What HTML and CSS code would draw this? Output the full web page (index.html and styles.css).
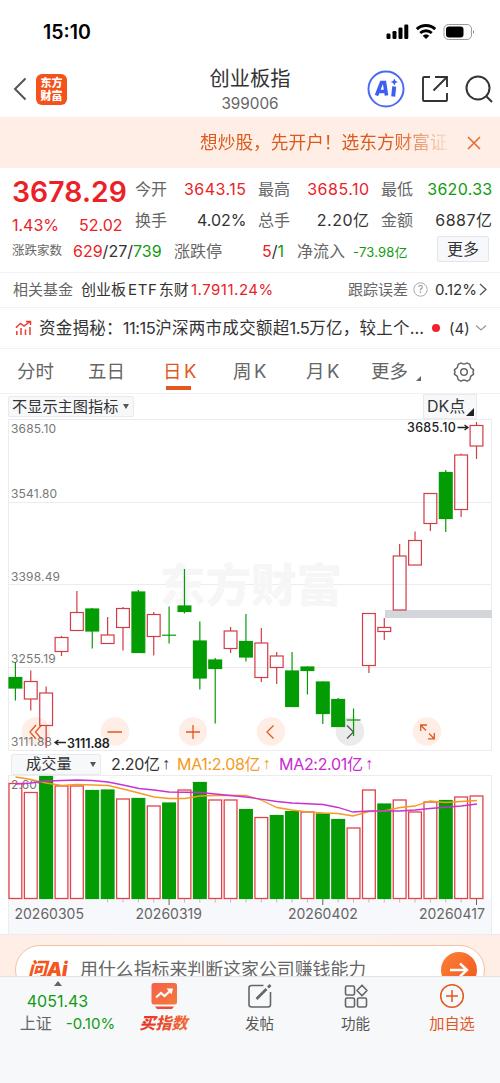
FILE: index.html
```html
<!DOCTYPE html>
<html lang="zh-CN">
<head>
  <meta charset="UTF-8">
  <meta name="viewport" content="width=device-width, initial-scale=1">
  <title>创业板指 399006</title>
  <link rel="stylesheet" href="styles.css">
</head>
<body>

  <div class="statusbar">
    <span class="time">15:10</span>
    <svg class="status-icons" width="92" height="20" viewBox="0 0 92 20">
      <rect x="1.5" y="12.5" width="4" height="5.5" rx="1.2"/>
      <rect x="7.5" y="10" width="4" height="8" rx="1.2"/>
      <rect x="13.5" y="6.5" width="4" height="11.5" rx="1.2"/>
      <rect x="19.3" y="3.5" width="4" height="14.5" rx="1.2"/>
      <path d="M31.8 8.2 A13.600 13.600 0 0 1 50.200 8.200" fill="none" stroke="#000" stroke-width="3"/>
      <path d="M35.200 12 A8.600 8.600 0 0 1 46.800 12" fill="none" stroke="#000" stroke-width="2.800"/>
      <path d="M41 18 L37.700 14.700 A4.800 4.800 0 0 1 44.300 14.700 Z"/>
      <rect x="59" y="3.500" width="27.500" height="15" rx="4.500" fill="none" stroke="#999"/>
      <rect x="61" y="5.500" width="17.500" height="11" rx="3"/>
      <path d="M88 9 Q90 11 88 13 Z" fill="#777"/>
    </svg>
  </div>

  <header class="nav">
    <div class="nav-left">
      <svg width="14" height="24" viewBox="0 0 14 24"><path d="M12.500 1.500 L2 12 L12.500 22.500" fill="none" stroke="#555" stroke-width="2"/></svg>
      <div class="logo"><span>东方</span><span>财富</span></div>
    </div>
    <div class="nav-title">
      <h1>创业板指</h1>
      <span>399006</span>
    </div>
    <div class="nav-right">
      <svg width="38" height="38" viewBox="0 0 38 38">
        <circle cx="19" cy="19" r="17.500" fill="none" stroke="#4a69f5" stroke-width="2"/>
        <g fill="#3d5ff0" stroke="#3d5ff0">
          <path d="M9.500 25.500 L14.500 12.500 H17.500 L19.500 25.500 M12.500 21.500 H18" fill="none" stroke-width="3.600"/>
          <path d="M27.200 16.500 L26.200 26.500" stroke-width="4"/>
          <path d="M27.300 8.500 L28.500 11 L31 12 L28.500 13 L27.300 15.500 L26.100 13 L23.600 12 L26.100 11 Z" stroke="none"/>
        </g>
      </svg>
      <svg width="28" height="28" viewBox="0 0 28 28" fill="none" stroke="#333" stroke-width="1.900">
        <path d="M9 2 H3 Q2 2 2 3 V25 Q2 26 3 26 H25 Q26 26 26 25 V18"/>
        <path d="M14 2 H26 V12 M26 2 L12.500 15.500"/>
      </svg>
      <svg width="28" height="28" viewBox="0 0 28 28" fill="none" stroke="#333" stroke-width="2">
        <circle cx="13" cy="13" r="11.500"/><path d="M21.500 21.500 L27 27"/>
      </svg>
    </div>
  </header>

  <div class="banner">
    <span class="banner-text">想炒股，先开户！选东方财富证</span>
    <svg width="14" height="14" viewBox="0 0 14 14"><path d="M1 1 L13 13 M13 1 L1 13" stroke="#e4682f" stroke-width="1.500"/></svg>
  </div>

  <section class="quote">
    <div class="price">
      <strong class="red">3678.29</strong>
      <div class="change red"><span>1.43%</span><span>52.02</span></div>
    </div>
    <dl class="stats">
      <div><dt>今开</dt><dd class="red">3643.15</dd></div>
      <div><dt>最高</dt><dd class="red">3685.10</dd></div>
      <div><dt>最低</dt><dd class="green">3620.33</dd></div>
      <div><dt>换手</dt><dd class="pct">4.02%</dd></div>
      <div><dt>总手</dt><dd>2.20亿</dd></div>
      <div><dt>金额</dt><dd>6887亿</dd></div>
    </dl>
    <div class="breadth">
      <span class="label-sm">涨跌家数</span>
      <span class="counts"><i class="red">629</i>/27/<i class="green">739</i></span>
      <span class="label">涨跌停</span>
      <span class="limit"><i class="red">5</i>/<i class="green">1</i></span>
      <span class="label">净流入</span>
      <span class="flow green">-73.98亿</span>
      <button class="more">更多</button>
    </div>
  </section>

  <div class="fund">
    <span class="fund-label">相关基金</span>
    <span class="fund-name">创业板<i>ETF</i>东财</span>
    <span class="fund-price red">1.7911.24%</span>
    <span class="fund-right">跟踪误差</span>
    <svg width="15" height="15" viewBox="0 0 15 15"><circle cx="7.500" cy="7.500" r="6.700" fill="none" stroke="#aaa"/><text x="7.500" y="11" text-anchor="middle" font-size="10" fill="#888">?</text></svg>
    <span class="fund-err">0.12%</span>
    <svg width="8" height="13" viewBox="0 0 8 13"><path d="M1 1 L7 6.500 L1 12" fill="none" stroke="#555" stroke-width="1.300"/></svg>
  </div>

  <div class="news">
    <svg width="17" height="16" viewBox="0 0 17 16" fill="none" stroke="#ee3b30" stroke-width="1.500">
      <path d="M1.500 8 V7 L5.500 3.500 L9 6 L15 1.500 M11 1.500 H15.500 V5"/>
      <path d="M1.800 11 V15 M6 8 V15 M10.500 9.500 V15 M15 7 V15"/>
    </svg>
    <span class="news-text">资金揭秘：<span class="tight">11:15</span>沪深两市成交额超<span class="tight">1.5</span>万亿，较上个…</span>
    <i class="dot"></i>
    <span class="news-count">(4)</span>
    <svg width="12" height="8" viewBox="0 0 12 8"><path d="M1 1.500 L6 6 L11 1.500" fill="none" stroke="#999" stroke-width="1.300"/></svg>
  </div>

  <nav class="tabs">
    <span>分时</span>
    <span>五日</span>
    <span class="active">日<i class="k">K</i></span>
    <span>周<i class="k">K</i></span>
    <span>月<i class="k">K</i></span>
    <span class="tab-more">更多<i></i></span>
    <svg width="22" height="20" viewBox="0 0 22 20" fill="none" stroke="#666" stroke-width="1.500">
      <path d="M7 1.300 Q8 .6 9 1.300 Q11 2.600 13 1.300 Q14 .6 15 1.300 L16.500 2.200 Q17.300 2.800 17.200 4 Q17.200 6 19.500 7 Q20.800 7.600 20.500 8.500 Q19.600 10 20.500 11.500 Q20.800 12.400 19.500 13 Q17.200 14 17.200 16 Q17.300 17.200 16.500 17.800 L15 18.700 Q14 19.400 13 18.700 Q11 17.400 9 18.700 Q8 19.400 7 18.700 L5.500 17.800 Q4.700 17.200 4.800 16 Q4.800 14 2.500 13 Q1.200 12.400 1.500 11.500 Q2.400 10 1.500 8.500 Q1.200 7.600 2.500 7 Q4.800 6 4.800 4 Q4.700 2.800 5.500 2.200 Z"/>
      <circle cx="11" cy="10" r="3.300"/>
    </svg>
  </nav>

  <div class="chart-head">
    <div class="select">不显示主图指标<i class="caret"></i></div>
    <div class="dk">DK点<i></i></div>
  </div>
  <svg id="kline" class="pane" width="500" height="332" viewBox="0 419 500 332"></svg>

  <div class="volume-head">
    <div class="select select-vol">成交量<i class="caret"></i></div>
    <span class="vol-now">2.20亿<b>↑</b></span>
    <span class="vol-ma1">MA1:2.08亿<b>↑</b></span>
    <span class="vol-ma2">MA2:2.01亿<b>↑</b></span>
  </div>
  <svg id="volume" class="pane" width="500" height="159" viewBox="0 775 500 159"></svg>

  <div class="ask">
    <div class="ask-box">
      <span class="ask-logo">问Ai</span>
      <span class="ask-text">用什么指标来判断这家公司赚钱能力</span>
      <span class="ask-go"><svg width="20" height="16" viewBox="0 0 20 16"><path d="M1 8 H18 M11 1.500 L18 8 L11 14.500" fill="none" stroke="#fff" stroke-width="2.400"/></svg></span>
    </div>
  </div>

  <footer class="toolbar">
    <div class="index-cell green">
      <i class="up"></i>
      <span class="index-value">4051.43</span>
      <span class="index-sub"><em>上证</em>-0.10%</span>
    </div>
    <div class="tool buy">
      <svg width="28" height="28" viewBox="0 0 28 28">
        <defs><linearGradient id="g" x1="0" y1="0" x2="1" y2="1"><stop offset="0" stop-color="#f4604a"/><stop offset="1" stop-color="#f47a3c"/></linearGradient></defs>
        <rect x="1.500" y="1" width="25.500" height="21.500" rx="2.500" fill="url(#g)"/>
        <path d="M5 24.500 H24 L22 27 H7 Z" fill="#ee4b32"/>
        <path d="M6 15.500 L11 11 L14.500 14 L20.500 8.500" fill="none" stroke="#fff" stroke-width="2.200"/>
        <path d="M16.500 6.500 H23 L21.500 12.500 Z" fill="#fff"/>
      </svg>
      <span>买指数</span>
    </div>
    <div class="tool">
      <svg width="28" height="28" viewBox="0 0 28 28" fill="none" stroke="#666" stroke-width="1.600">
        <path d="M17.500 3.500 H5.500 Q3 3.500 3 6 V22.500 Q3 25 5.500 25 H22 Q24.500 25 24.500 22.500 V10"/>
        <path d="M10.500 17 L20.500 7" stroke-width="2.600"/><path d="M22 5.500 L24.500 3" stroke-width="2.600"/>
      </svg>
      <span>发帖</span>
    </div>
    <div class="tool">
      <svg width="28" height="28" viewBox="0 0 28 28" fill="none" stroke="#666" stroke-width="1.600">
        <rect x="3.500" y="4" width="9" height="9" rx="1.500"/>
        <rect x="3.500" y="16" width="9" height="9" rx="1.500"/>
        <rect x="15.500" y="16" width="9" height="9" rx="1.500"/>
        <path d="M20 3.200 L25 8.500 L20 13.800 L15 8.500 Z" stroke-linejoin="round"/>
      </svg>
      <span>功能</span>
    </div>
    <div class="tool add">
      <svg width="28" height="28" viewBox="0 0 28 28" fill="none" stroke="#e2571f" stroke-width="1.500">
        <circle cx="14" cy="14" r="11.300"/><path d="M14 8 V20 M8 14 H20"/>
      </svg>
      <span>加自选</span>
    </div>
  </footer>

  <script src="chart.js"></script>
</body>
</html>
```
FILE: styles.css
```css
* {
  box-sizing: border-box;
}

body {
  margin: 0;
  width: 500px;
  height: 1083px;
  overflow: hidden;
  background: #fff;
  color: #333;
  font-family: Inter, "Noto Sans CJK SC", sans-serif;
  font-size: 16px;
  line-height: 1;
}

svg {
  display: block;
  flex: none;
}

i, em {
  font-style: normal;
}

span {
  white-space: nowrap;
}

.red { color: #eb2127; }
.green { color: #109b10; }

/* status bar */
.statusbar {
  height: 61px;
  padding: 20px 23px 0 43px;
  display: flex;
  justify-content: space-between;
}

.time {
  font-size: 19.500px;
  font-weight: 600;
  color: #000;
  line-height: 24px;
}

.status-icons {
  margin-top: 1px;
}

/* nav */
.nav {
  height: 56px;
  display: grid;
  grid-template-columns: 1fr 120px 1fr;
  align-items: center;
}

.nav-left {
  display: flex;
  align-items: center;
  gap: 9px;
  padding-left: 13px;
}

.logo {
  width: 31px;
  height: 31px;
  border-radius: 6px;
  background: #f4511b;
  color: #fff;
  font-family: "Noto Sans CJK SC", sans-serif;
  font-size: 11px;
  font-weight: 900;
  line-height: 13px;
  display: flex;
  flex-direction: column;
  align-items: center;
  justify-content: center;
}

.nav-title {
  display: flex;
  flex-direction: column;
  align-items: center;
  gap: 7px;
  padding-top: 2px;
}

.nav-title h1 {
  margin: 0;
  font-size: 20.200px;
  font-weight: 400;
}

.nav-title span {
  font-size: 15.300px;
  color: #666;
}

.nav-right {
  display: flex;
  align-items: center;
  justify-content: flex-end;
  gap: 16px;
  padding-right: 7px;
}

/* banner */
.banner {
  height: 51px;
  background: #feeee5;
  padding: 0 19px 0 200px;
  display: flex;
  align-items: center;
  justify-content: space-between;
}

.banner-text {
  font-size: 17.700px;
  color: #dc5a1e;
  width: 248px;
  overflow: hidden;
  line-height: 26px;
  -webkit-mask-image: linear-gradient(90deg, #000 78%, transparent 102%);
  mask-image: linear-gradient(90deg, #000 78%, transparent 102%);
}

/* quote */
.quote {
  height: 105px;
  padding: 5px 8px 0 12px;
  display: grid;
  grid-template-columns: 123px 357px;
  grid-template-rows: 62px 31px;
  border-bottom: 1px solid #f2f2f4;
}

.price strong {
  display: block;
  font-size: 28.300px;
  font-weight: 600;
  line-height: 38px;
  letter-spacing: .1px;
}

.change {
  display: flex;
  gap: 20px;
  line-height: 29px;
}

.stats {
  margin: 0;
  display: grid;
  grid-template-columns: repeat(3, 111px);
  column-gap: 12px;
}

.stats div {
  display: flex;
  justify-content: space-between;
  align-items: center;
  height: 31px;
}

.stats dt, .label {
  color: #666;
}

.stats dd {
  margin: 0 -.5px 0 0;
  letter-spacing: .5px;
}

.stats .green {
  letter-spacing: .3px;
}

.stats .pct {
  letter-spacing: 0;
}

.breadth {
  grid-column: span 2;
  display: flex;
  align-items: center;
}

.label-sm {
  font-size: 12.500px;
  color: #666;
  width: 61px;
  padding-top: 2px;
}

.counts { width: 101px; }
.limit { width: 35px; }
.breadth .label { width: 88px; }
.breadth .limit + .label { width: 56px; }

.flow {
  font-size: 13px;
  letter-spacing: .2px;
  padding-top: 3px;
}

.more {
  margin-left: auto;
  margin-right: 3px;
  margin-top: -3px;
  width: 52px;
  height: 26px;
  padding: 0;
  border: 1px solid #e4e5ea;
  border-radius: 2px;
  background: #f7f8fb;
  color: #333;
  font: inherit;
}

/* related fund */
.fund {
  height: 35px;
  padding: 0 13px 1px;
  display: flex;
  align-items: center;
  font-size: 15px;
  border-bottom: 1px solid #f2f2f4;
}

.fund-label, .fund-right { color: #666; }
.fund-label { width: 68px; }
.fund-name { width: 110px; }
.fund-name i { margin: 0 1px 0 2px; letter-spacing: .7px; }
.fund-price { letter-spacing: .5px; }
.fund-right { margin-left: auto; margin-right: 5px; }
.fund-err { margin: 0 2px 0 7px; }

/* news */
.news {
  height: 41px;
  padding: 0 13px 0 15px;
  display: flex;
  align-items: center;
  border-bottom: 1px solid #f2f2f4;
}

.news-text {
  flex: none;
  margin-left: 7px;
  width: 393px;
  font-size: 16.500px;
  letter-spacing: .27px;
  line-height: 24px;
}

.tight { letter-spacing: -.5px; }

.dot {
  flex: none;
  width: 8px;
  height: 8px;
  border-radius: 50%;
  background: #f5222d;
}

.news-count {
  flex: none;
  margin-left: 9px;
  margin-right: auto;
  font-size: 15px;
}

/* period tabs */
.tabs {
  height: 45px;
  padding-left: 17px;
  display: grid;
  grid-template-columns: 71px 75px 70px 73px 65px 82px 22px;
  align-items: center;
  font-size: 18.500px;
  color: #666;
  border-bottom: 1px solid #f2f2f4;
}

.tabs .k {
  margin-left: 2.500px;
}

.tabs .active {
  color: #e4571b;
  height: 45px;
  line-height: 45px;
  background: linear-gradient(#e4571b, #e4571b) 3px 37px / 25px 4px no-repeat;
}

.tab-more {
  display: flex;
  align-items: flex-end;
  gap: 8px;
}

.tab-more i {
  border-left: 5px solid transparent;
  border-bottom: 5px solid #666;
}

/* chart headers */
.chart-head {
  height: 25px;
  padding: 0 23px 0 8px;
  display: flex;
  align-items: center;
  justify-content: space-between;
}

.select {
  width: 126px;
  height: 21px;
  padding: 0 4px 0 3px;
  border: 1px solid #e8eaef;
  border-radius: 2px;
  background: #f7f8fa;
  display: flex;
  align-items: center;
  justify-content: space-between;
  font-size: 15.200px;
  white-space: nowrap;
}

.caret {
  border: 3px solid transparent;
  border-top: 5px solid #555;
  border-bottom: 0;
}

.dk {
  height: 25px;
  width: 54px;
  padding: 0 2px 2px 3px;
  border: 1px solid #e8eaef;
  background: #f7f8fa;
  display: flex;
  align-items: flex-end;
  justify-content: space-between;
  line-height: 20px;
}

.dk i {
  border-left: 8px solid transparent;
  border-bottom: 8px solid #222;
}

.volume-head {
  height: 24px;
  padding: 2px 0 0 11px;
  display: flex;
  align-items: center;
}

.select-vol {
  width: 90px;
  padding-left: 14px;
}

.volume-head span { display: flex; letter-spacing: -.3px; }
.volume-head b {
  font-family: "Liberation Sans", sans-serif;
  font-weight: 400;
  width: 12px;
  text-align: center;
}
.vol-now { margin-left: 10px; width: 66px; }
.vol-ma1 { width: 102px; color: #f59a23; }
.vol-ma2 { color: #c828d2; }

/* chart panes */
.pane .grid { stroke: #ececee; fill: none; }
.pane .axis { fill: #777; font-size: 12px; letter-spacing: .15px; }
.pane .mark { fill: #222; font-size: 12.500px; font-weight: 500; letter-spacing: .3px; }
.pane .mark-low { font-weight: 600; letter-spacing: -.1px; }
.pane .date { fill: #666; font-size: 14px; }
.pane .watermark { fill: #f6f6f6; font-size: 45.500px; font-weight: 900; }
.pane .rise { stroke: #d23c46; fill: #fff; stroke-width: 1.200; }
.pane .vol.rise { stroke: #e2434a; stroke-width: 1.300; }
.pane .fall { stroke: #049c04; fill: #049c04; stroke-width: 1.200; }
.pane .ctl { fill: #feeee6; }
.pane .ctl.off { fill: #ebebeb; }
.pane .glyph { fill: none; stroke: #e4571b; stroke-width: 1.300; }
.pane .glyph.off { stroke: #555; }
.pane .ma1 { fill: none; stroke: #f59a23; stroke-width: 1.300; }
.pane .ma2 { fill: none; stroke: #c832d2; stroke-width: 1.300; }

/* ask bar */
.ask {
  height: 42px;
  overflow: hidden;
  padding: 10px 15px 0;
  background: linear-gradient(90deg, #feeee5, #fdf3ee 50%, #feeee5);
  border-top: 1px solid #ececf0;
}

.ask-box {
  height: 50px;
  border: 1px solid #f8bfa6;
  border-radius: 25px;
  background: #fff;
  padding: 0 7px 0 12px;
  display: flex;
  align-items: center;
}

.ask-logo {
  width: 52px;
  font-size: 19px;
  font-weight: 900;
  font-style: italic;
  line-height: 30px;
  color: #f4561e;
}

.ask-text {
  font-size: 17.900px;
  color: #666;
  line-height: 30px;
}

.ask-go {
  margin-left: auto;
  width: 36px;
  height: 36px;
  border-radius: 50%;
  background: linear-gradient(135deg, #fb8238, #f2541b);
  display: flex;
  align-items: center;
  justify-content: center;
}

/* bottom toolbar */
.toolbar {
  height: 107px;
  background: #f7f8fa;
  border-top: 1px solid #e2e3e7;
  display: grid;
  grid-template-columns: 115px 97px 95px 97px 96px;
}

.index-cell {
  display: flex;
  flex-direction: column;
  align-items: center;
}

.up {
  margin-top: 4px;
  border: 4px solid transparent;
  border-bottom: 5px solid #666;
  border-top: 0;
}

.index-value {
  margin-top: 7px;
}

.index-sub {
  margin-top: 6px;
  margin-left: 20px;
  font-size: 15px;
}

.index-sub em {
  color: #666;
  font-size: 16px;
  margin-right: 14px;
}

.tool {
  display: flex;
  flex-direction: column;
  align-items: center;
  gap: 6px;
  padding-top: 5px;
  color: #555;
  font-size: 14.500px;
  line-height: 16px;
}

.buy span {
  margin-top: -2px;
  font-size: 16px;
  font-weight: 900;
  font-style: italic;
  background: linear-gradient(90deg, #e42c24, #f2703c);
  -webkit-background-clip: text;
  background-clip: text;
  color: transparent;
  padding: 1px 2px;
}

.tool.add {
  color: #e2571f;
  font-size: 15.200px;
}
```
FILE: chart.js
```javascript
// each candle: direction, high, body top, body bottom, low, volume top
const candles = [
  ['g', 662, 677.5, 688, 700.5, 783, 'r'],
  ['r', 670.5, 681.5, 699, 710.5, 792],
  ['r', 686.5, 693, 725.5, 748, 776, 'g'],
  ['r', 636, 637.5, 651.5, 656, 785.5],
  ['r', 591, 612.5, 630.5, 630.5, 785.5],
  ['g', 608, 609, 631, 648.5, 790],
  ['r', 617, 635, 643.5, 643.5, 789.5, 'g'],
  ['r', 607, 608.5, 627.5, 650.5, 798.5],
  ['g', 590, 592, 652.5, 652.5, 798],
  ['r', 612, 614.5, 636.5, 655.5, 805.5],
  ['g', 606.5, 635.2, 635.2, 643.5, 802.5],
  ['g', 569, 606, 611.5, 613.5, 789.5, 'r'],
  ['g', 621.5, 641, 678, 689.5, 782],
  ['g', 658, 660, 668.5, 723.5, 799.5, 'r'],
  ['r', 627, 631, 648.5, 653, 799.5],
  ['g', 614, 641.5, 657, 661.5, 809],
  ['r', 628, 643, 677.5, 682, 817],
  ['r', 652, 656, 667.5, 684, 815, 'g'],
  ['g', 652, 671, 706.5, 706.5, 811],
  ['g', 666.5, 667, 670.5, 694.5, 811.5, 'r'],
  ['g', 681.5, 682, 713.5, 724, 813.5],
  ['g', 698, 699.5, 726.5, 727, 819],
  ['g', 708.5, 720, 720, 736, 827.5, 'r'],
  ['r', 613, 613.5, 665.5, 673, 789.5],
  ['r', 618, 627.5, 631.5, 640, 803.5, 'g'],
  ['r', 544, 556, 610, 610, 799.5],
  ['r', 531.5, 540.5, 565, 565, 811.5],
  ['r', 493, 493.5, 523.5, 531, 801.5],
  ['g', 470, 472.5, 518.5, 532, 800],
  ['r', 453.5, 455, 509.5, 517, 796.5],
  ['r', 422, 425.5, 446, 459, 795.5]
];

const STEP = 15.37;
const cx = i => 15.4 + i * STEP;
const cls = d => d === 'r' ? 'rise' : 'fall';

function drawKline() {
  let s = '<path class="grid" d="M8.500 419.500 H491.500 V750.500 H8.500 Z M8 502.500 H492 M8 584.500 H492 M8 667.500 H492"/>';
  s += '<text class="watermark" x="251" y="602" text-anchor="middle">东方财富</text>';
  s += '<rect x="385" y="610" width="107" height="8" fill="#d3d6da"/>';

  // round control buttons
  [36, 115, 193, 271, 350, 427].forEach((x, i) => {
    s += `<circle class="ctl ${i === 4 ? 'off' : ''}" cx="${x}" cy="731.500" r="14.300"/>`;
  });
  s += '<path class="glyph" d="M36 725 L30 732 L36 739 M41.500 725 L35.500 732 L41.500 739 M107.500 732 H122 M186 732 H200 M193 725 V739 M273.500 725.500 L267 732 L273.500 738.500"/>';
  s += '<path class="glyph off" d="M347 725.500 L353.500 732 L347 738.500"/>';
  s += '<path class="glyph" d="M426 730.500 L421 725.500 M420.700 731 V725 H427 M429 733.500 L434 738.500 M434.300 733 V738.800 H428"/>';

  [['3685.10', 433], ['3541.80', 498], ['3398.49', 580.5], ['3255.19', 663], ['3111.88', 745.5]].forEach(([t, y]) => {
    s += `<text class="axis" x="11" y="${y}">${t}</text>`;
  });

  candles.forEach(([d, high, top, bottom, low], i) => {
    const x = cx(i);
    s += `<g class="${cls(d)}"><path d="M${x} ${high} V${top} M${x} ${bottom} V${low}"/>`;
    s += top === bottom
      ? `<path d="M${x - 7} ${top} H${x + 7}"/></g>`
      : `<rect x="${x - 6.4}" y="${top}" width="12.800" height="${bottom - top}" ${d === 'r' ? 'fill-opacity="0"' : ''}/></g>`;
  });

  s += '<path d="M457.500 427.500 H467 M464.500 425 L468 427.500 L464.500 430" fill="none" stroke="#222" stroke-width="1.300"/>';
  s += '<text class="mark" x="407" y="432">3685.10</text>';
  s += '<path d="M56 742.500 H66 M58.500 740 L55 742.500 L58.500 745" fill="none" stroke="#222" stroke-width="1.300"/>';
  s += '<text class="mark mark-low" x="67" y="747.500">3111.88</text>';
  document.getElementById('kline').innerHTML = s;
}

function drawVolume() {
  const base = 898.5;
  let s = '<rect x="8" y="899" width="484" height="35" fill="#f7f8fb"/>';
  s += '<path class="grid" d="M8.500 934 V775.500 H491.500 V934"/>';
  s += '<text class="axis" x="11" y="788.500">2.60亿</text>';
  candles.forEach((c, i) => {
    const d = c[6] || c[0];
    s += `<rect class="vol ${cls(d)}" x="${cx(i) - 6.4}" y="${c[5] + .5}" width="12.800" height="${base - c[5] - .5}" ${i === 0 ? 'fill-opacity="0"' : ''}/>`;
    if (i > 5) {
      const big = i === 10 || i === 20 || i === 30;
      s += `<path d="M${cx(i)} 899 V${big ? 905 : 902.5}" stroke="${big ? '#666' : '#bbb'}"/>`;
    }
  });
  s += '<polyline class="ma1" points="15.500,777 31,779.500 46,783 62,785.500 77,784.500 108,785.500 123,789 139,793 154,797 169,798.500 185,798.500 200,796 215,795.500 246,795.500 261,800 277,807.500 292,810 307,812 323,813 338,813.500 353,816 369,811.500 384,811 400,807.500 415,806 430,801 445,802.500 461,801.500 477,800.500"/>';
  s += '<polyline class="ma2" points="15.500,784 31,783 46,781 62,780.500 77,780 92,780.500 108,782 123,785 139,788.500 154,790 169,792 200,792.500 246,797 277,801.500 292,803 323,804.500 338,807.500 353,812 369,811 400,811 415,810 430,808.500 461,806 477,804"/>';
  [['20260305', 14.5], ['20260319', 135.5], ['20260402', 288], ['20260417', 419]].forEach(([t, x]) => {
    s += `<text class="date" x="${x}" y="919">${t}</text>`;
  });
  document.getElementById('volume').innerHTML = s;
}

drawKline();
drawVolume();
```
